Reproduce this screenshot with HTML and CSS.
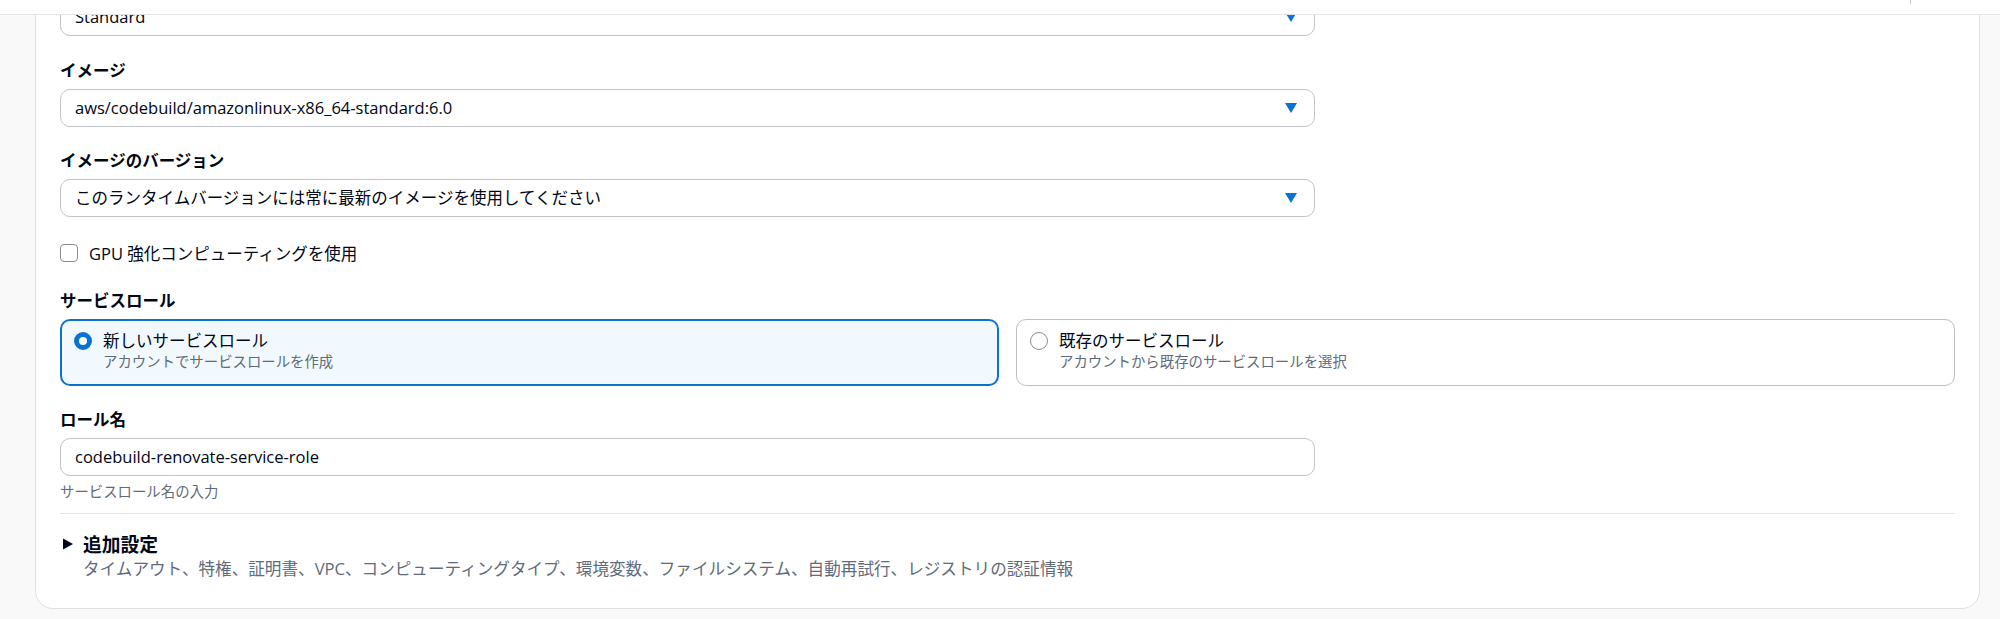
FILE: index.html
```html
<!DOCTYPE html>
<html lang="ja">
<head>
<meta charset="utf-8">
<title>CodeBuild 環境</title>
<link rel="stylesheet" href="styles.css">
</head>
<body>
<div class="viewport">
  <header class="topbar"><span class="topbar-sep"></span></header>
  <main class="page">
    <section class="card">
      <div class="field">
        <div class="select"><span class="select-value">Standard</span>
          <svg class="caret" viewBox="0 0 12 10" width="12" height="10"><polygon points="0,0 12,0 6,10" /></svg>
        </div>
      </div>

      <div class="field">
        <div class="label">イメージ</div>
        <div class="select"><span class="select-value">aws/codebuild/amazonlinux-x86_64-standard:6.0</span>
          <svg class="caret" viewBox="0 0 12 10" width="12" height="10"><polygon points="0,0 12,0 6,10" /></svg>
        </div>
      </div>

      <div class="field">
        <div class="label">イメージのバージョン</div>
        <div class="select"><span class="select-value">このランタイムバージョンには常に最新のイメージを使用してください</span>
          <svg class="caret" viewBox="0 0 12 10" width="12" height="10"><polygon points="0,0 12,0 6,10" /></svg>
        </div>
      </div>

      <div class="field field-check">
        <label class="checkbox-row"><span class="checkbox"></span><span>GPU 強化コンピューティングを使用</span></label>
      </div>

      <div class="field">
        <div class="label">サービスロール</div>
        <div class="tiles">
          <div class="tile tile-selected">
            <span class="radio radio-on"></span>
            <div class="tile-text">
              <div class="tile-title">新しいサービスロール</div>
              <div class="tile-desc">アカウントでサービスロールを作成</div>
            </div>
          </div>
          <div class="tile">
            <span class="radio"></span>
            <div class="tile-text">
              <div class="tile-title">既存のサービスロール</div>
              <div class="tile-desc">アカウントから既存のサービスロールを選択</div>
            </div>
          </div>
        </div>
      </div>

      <div class="field">
        <div class="label">ロール名</div>
        <div class="input">codebuild-renovate-service-role</div>
        <div class="help">サービスロール名の入力</div>
      </div>

      <div class="divider"></div>

      <div class="expand">
        <div class="expand-head">
          <svg class="expand-icon" viewBox="0 0 13 12" width="13" height="12"><polygon points="3,0.5 13,6 3,11.5" /></svg>
          <span class="expand-title">追加設定</span>
        </div>
        <div class="expand-desc">タイムアウト、特権、証明書、VPC、コンピューティングタイプ、環境変数、ファイルシステム、自動再試行、レジストリの認証情報</div>
      </div>
    </section>
  </main>
</div>
</body>
</html>
```

FILE: styles.css
```css
* { box-sizing: border-box; }

html, body {
  margin: 0;
  padding: 0;
  background: #f9f9fa;
}

body {
  font-family: "Open Sans", "Noto Sans CJK JP", sans-serif;
  font-size: 16.5px;
  color: #000716;
}

.viewport {
  position: relative;
  width: 2000px;
  height: 619px;
  overflow: hidden;
}

.topbar {
  position: absolute;
  top: 0;
  left: 0;
  right: 0;
  height: 15px;
  background: #ffffff;
  border-bottom: 1px solid #e3e4e8;
  z-index: 5;
  display: flex;
  justify-content: flex-end;
  padding-right: 89px;
}

.topbar-sep {
  width: 1px;
  height: 4px;
  background: #c6c6cd;
}

.page {
  padding: 0 20px 0 35px;
}

.card {
  margin-top: -30px;
  background: #ffffff;
  border: 1px solid #dedee3;
  border-radius: 0 0 18px 18px;
  padding: 27px 24px 28px 24px;
}

.field + .field {
  margin-top: 22.5px;
}

.field-check {
  margin-top: 25px !important;
}

.label {
  font-weight: 700;
  line-height: 24px;
  margin-bottom: 6px;
}

.select,
.input {
  max-width: 1255px;
  height: 38px;
  border: 1px solid #c2c2c9;
  border-radius: 10px;
  background: #ffffff;
  display: flex;
  align-items: center;
  padding: 0 17px 0 14px;
  line-height: 22px;
}

.select-value {
  flex: 1;
  white-space: nowrap;
}

.caret {
  fill: #0972d3;
  flex: none;
}

.checkbox-row {
  display: flex;
  align-items: center;
  gap: 11px;
  line-height: 24px;
}

.checkbox {
  width: 18px;
  height: 18px;
  border: 1.5px solid #8c8c94;
  border-radius: 4px;
  background: #ffffff;
  flex: none;
  margin-top: -2px;
}

.tiles {
  display: grid;
  grid-template-columns: 1fr 1fr;
  gap: 17px;
}

.tile {
  display: flex;
  align-items: flex-start;
  gap: 11px;
  border: 1px solid #bdbdc4;
  border-radius: 10px;
  padding: 10px 19px 13px 13px;
  background: #ffffff;
}

.tile-selected {
  border: 2px solid #0972d3;
  background: #f1f9fe;
  padding: 9px 18px 12px 12px;
}

.radio {
  width: 18px;
  height: 18px;
  border-radius: 50%;
  border: 1.5px solid #8c8c94;
  background: #ffffff;
  flex: none;
  margin-top: 2px;
}

.radio-on {
  border: 5.5px solid #0972d3;
}

.tile-title {
  line-height: 22px;
}

.tile-desc {
  font-size: 14.4px;
  line-height: 20px;
  color: #5f6b7a;
}

.input {
  padding-right: 14px;
}

.help {
  margin-top: 6px;
  font-size: 14.4px;
  line-height: 20px;
  color: #5f6b7a;
}

.divider {
  margin-top: 11px;
  height: 1px;
  background: #e3e4e8;
}

.expand {
  margin-top: 17px;
}

.expand-head {
  display: flex;
  align-items: center;
  line-height: 27px;
}

.expand-icon {
  fill: #000716;
  margin-right: 10px;
  margin-top: -2px;
  flex: none;
}

.expand-title {
  font-size: 18.75px;
  font-weight: 700;
}

.expand-desc {
  padding-left: 23px;
  line-height: 22px;
  font-size: 16.6px;
  color: #5f6b7a;
}
```
